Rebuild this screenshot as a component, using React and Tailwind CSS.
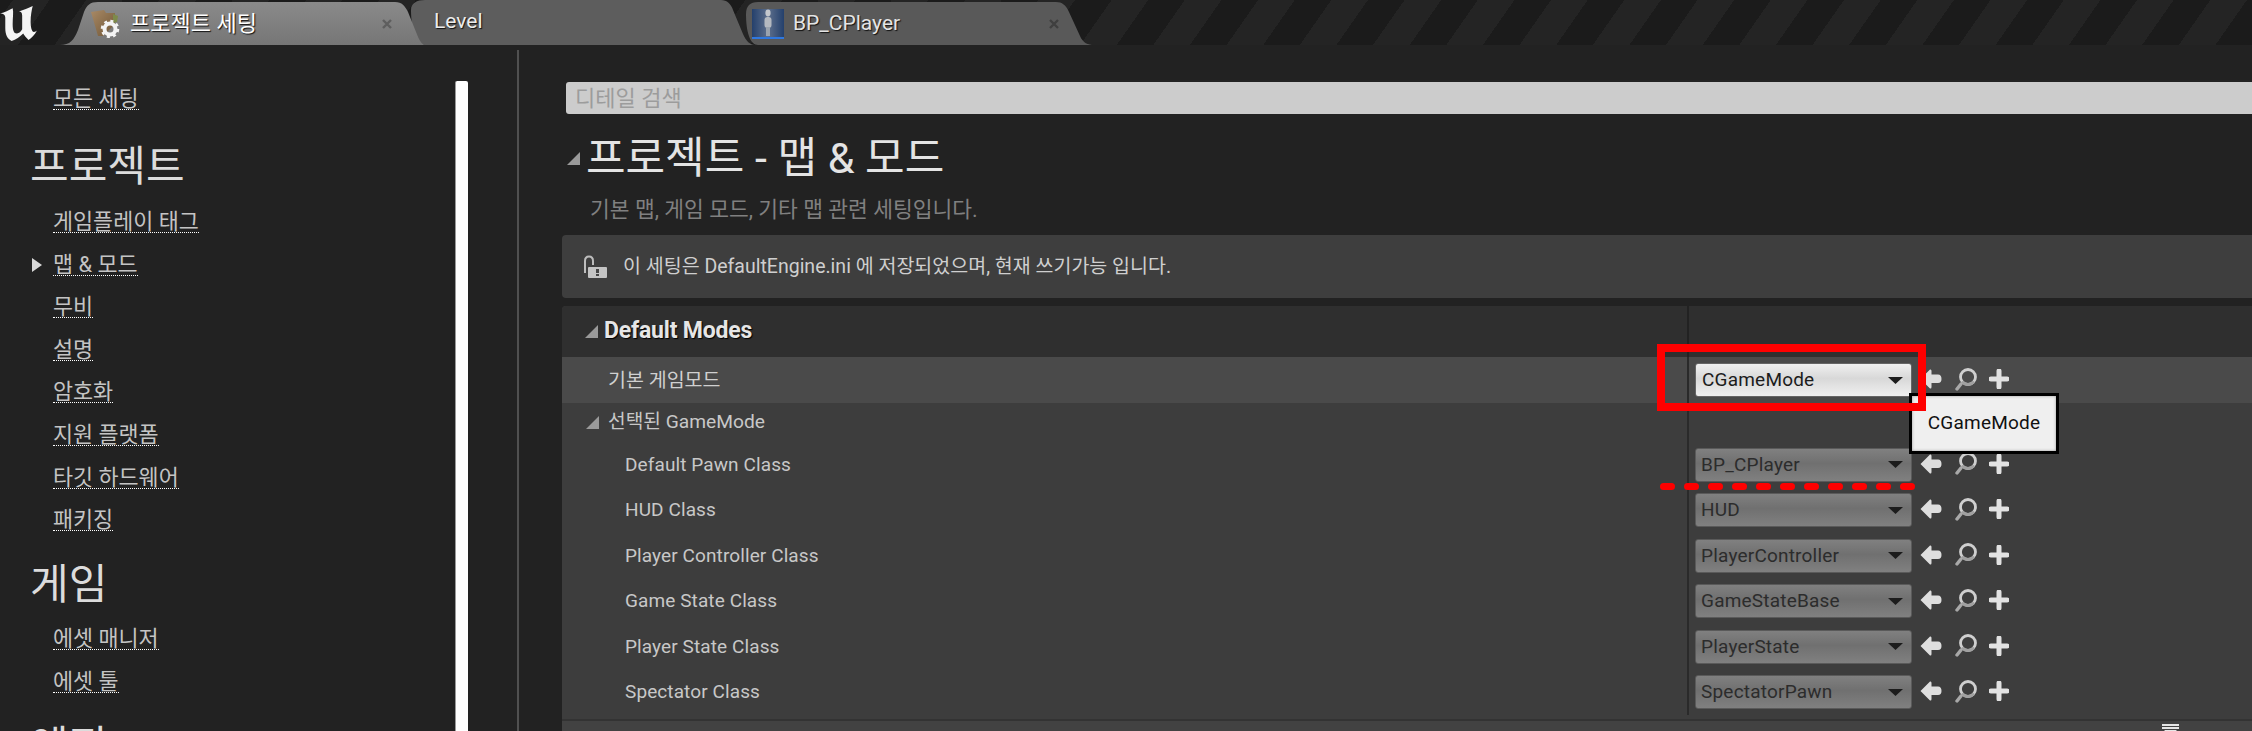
const font = "font-['Roboto','Noto_Sans_CJK_KR',sans-serif]";

function Collapse({ className = "" }) {
  return (
    <svg width="13" height="13" viewBox="0 0 13 13" className={className}>
      <polygon points="0,13 13,0 13,13" fill="#9a9a9a" />
    </svg>
  );
}

function Caret() {
  return (
    <svg width="15" height="7" viewBox="0 0 15 7" className="shrink-0">
      <polygon points="0,0 15,0 7.5,7" fill="#1c1c1c" />
    </svg>
  );
}

function BackArrow() {
  return (
    <svg width="22" height="20" viewBox="0 0 22 20">
      <path d="M0.5 10 L10 0.5 Q11.5 0 11.5 2 L11.5 5.5 L18 5.5 Q21.5 5.5 21.5 10 Q21.5 14 18 14 L11.5 14 L11.5 18 Q11.5 20 10 19.5 Z" fill="#dedede" />
    </svg>
  );
}

function Finder() {
  return (
    <svg width="22" height="23" viewBox="0 0 22 23">
      <path d="M6 16 L2 21" stroke="#a8a8a8" strokeWidth="3.4" strokeLinecap="round" />
      <circle cx="13" cy="9" r="7.5" fill="none" stroke="#cfcfcf" strokeWidth="2.8" />
      <path d="M7 13.5 A7.5 7.5 0 0 0 19 13.5" fill="none" stroke="#a0a0a0" strokeWidth="2.8" />
    </svg>
  );
}

function Plus() {
  return (
    <svg width="20" height="20" viewBox="0 0 20 20">
      <path d="M10 2 V18 M2 10 H18" stroke="#e2e2e2" strokeWidth="5" strokeLinecap="round" />
    </svg>
  );
}

function Lock() {
  return (
    <svg width="25" height="24" viewBox="0 0 25 24" className="shrink-0">
      <path d="M2 18 V6 Q2 1.5 6 1.5 Q10 1.5 10 6 V10" fill="none" stroke="#bdbdbd" strokeWidth="2" />
      <rect x="5" y="12" width="19" height="11" rx="1" fill="#c4c4c4" />
      <rect x="13" y="14" width="3" height="4" fill="#444" />
      <rect x="13" y="19" width="3" height="2" fill="#444" />
    </svg>
  );
}

function Logo() {
  return (
    <svg width="38" height="36" viewBox="0 0 36 34" className="shrink-0">
      <path
        d="M0 8 C5 7 8 5 12 3 C13 7 12 12 12 18 C12 24 13 27 16 27 C18 27 20 25 21 23 L21 10 C21 7 20 6 18 6 C22 5 27 3 31 1 C30 5 29 10 29 16 C29 21 30 24 31 25 C32 26 34 25 35 24 C33 28 30 31 27 33 C25 31 23 29 22 27 C19 30 15 33 11 34 C7 32 5 28 5 22 L5 12 C5 9 3 8 0 8 Z"
        fill="#f4f4f4"
      />
    </svg>
  );
}

function FolderIcon() {
  return (
    <svg width="30" height="28" viewBox="0 0 30 28" className="shrink-0">
      <defs>
        <linearGradient id="fold" x1="0" y1="0" x2="1" y2="1">
          <stop offset="0" stopColor="#a98a66" />
          <stop offset="1" stopColor="#6f5535" />
        </linearGradient>
      </defs>
      <path d="M0 2 L13 0 L15 3 L24 3 L24 14 L12 26 L7 26 Z" fill="url(#fold)" />
      <path d="M22 4 L27 6 L26 12 L22 13 Z" fill="#7d8a4a" />
      <circle cx="19" cy="19" r="5.5" fill="none" stroke="#f3f3f3" strokeWidth="4" />
      <circle cx="19" cy="19" r="8" fill="none" stroke="#f3f3f3" strokeWidth="2.5" strokeDasharray="3 3.3" />
    </svg>
  );
}

function PawnIcon() {
  return (
    <div className="w-[32px] h-[30px] shrink-0 bg-[linear-gradient(90deg,#24406c,#5d6f8c_50%,#24406c)] border-b-2 border-[#2f78e0] flex justify-center">
      <svg width="14" height="27" viewBox="0 0 14 27">
        <ellipse cx="7" cy="4" rx="2.6" ry="3.4" fill="#c4c8cd" />
        <rect x="3.5" y="8" width="7" height="11" rx="3" fill="#b4b9c0" />
        <rect x="5" y="18" width="4" height="9" fill="#9aa3ae" />
      </svg>
    </div>
  );
}

function CloseX({ color }) {
  return (
    <svg width="10" height="10" viewBox="0 0 10 10" className="shrink-0">
      <path d="M1 1 L9 9 M9 1 L1 9" stroke={color} strokeWidth="2.4" />
    </svg>
  );
}

function SideItem({ label, active }) {
  return (
    <div className="h-[42.6px] flex items-end pl-[53px] relative">
      {active && (
        <svg width="10" height="14" viewBox="0 0 10 14" className="absolute left-[32px] bottom-[4px]">
          <polygon points="0,0 10,7 0,14" fill="#d8d8d8" />
        </svg>
      )}
      <span className="text-[21.8px] leading-[25px] h-[24px] text-[#c4c4c4] border-b border-dotted border-white whitespace-nowrap">
        {label}
      </span>
    </div>
  );
}

function SideHeading({ label, height }) {
  return (
    <div className={`${height} flex items-end pl-[30px]`}>
      <span className="text-[42px] leading-[50px] text-[#dcdcdc] whitespace-nowrap">{label}</span>
    </div>
  );
}

function Dropdown({ value, active }) {
  return (
    <div
      className={
        active
          ? "w-[217px] h-[34px] rounded-[3px] border border-[#666] bg-[linear-gradient(#f0f0f0,#d8d8d8_45%,#f0f0f0)] flex items-center justify-between pl-[6px] pr-[8px]"
          : "w-[217px] h-[34px] rounded-[3px] border border-[#5a5a5a] bg-[linear-gradient(#808080,#707070_45%,#808080)] flex items-center justify-between pl-[5px] pr-[8px]"
      }
    >
      <span className={active ? "text-[19px] text-[#1c1c1c] tracking-[0.2px]" : "text-[19px] text-[#2c2c2c] tracking-[0.2px]"}>
        {value}
      </span>
      <Caret />
    </div>
  );
}

function ValueCell({ value, active }) {
  return (
    <div className="h-full flex items-center border-l-2 border-[#2a2a2a] pl-[6px]">
      <Dropdown value={value} active={active} />
      <div className="flex items-center ml-[8px] mb-[2px]">
        <BackArrow />
        <div className="ml-[13px] h-[23px]"><Finder /></div>
        <div className="ml-[12px] h-[20px]"><Plus /></div>
      </div>
    </div>
  );
}

function ClassRow({ label, value }) {
  return (
    <div className="h-[45.5px] flex items-center">
      <div className="w-[1125px] pl-[63px] text-[19px] text-[#c8c8c8] tracking-[0.1px]">{label}</div>
      <ValueCell value={value} />
    </div>
  );
}

const classes = [
  ["Default Pawn Class", "BP_CPlayer"],
  ["HUD Class", "HUD"],
  ["Player Controller Class", "PlayerController"],
  ["Game State Class", "GameStateBase"],
  ["Player State Class", "PlayerState"],
  ["Spectator Class", "SpectatorPawn"],
];

export default function App() {
  return (
    <div className={`${font} relative w-[2252px] h-[731px] overflow-hidden bg-[#222222]`}>
      {/* Tab strip */}
      <div className="h-[45px] flex items-end overflow-hidden bg-[repeating-linear-gradient(-55deg,#1b1b1b_0px,#1b1b1b_30px,#242424_30px,#242424_60px)]">
        <div className="w-[60px] h-[43px] flex items-center self-start pt-[2px]">
          <Logo />
        </div>
        <div className="relative z-20 w-[365px] h-[43px] shrink-0 bg-[linear-gradient(#8a8a8a,#767676)] [clip-path:path('M0_43C10_43_14_38_18_28L24_10C27_3_30_0_38_0L335_0C342_0_345_4_348_10L356_30C359_38_362_43_365_43Z')] flex items-center pl-[31px] pr-[33px]">
          <FolderIcon />
          <span className="ml-[9px] text-[22px] text-white [text-shadow:1px_1px_1px_#111] whitespace-nowrap">프로젝트 세팅</span>
          <span className="flex-1" />
          <CloseX color="#5e5e5e" />
        </div>
        <div className="relative z-0 ml-[-14px] w-[344px] h-[45px] shrink-0 bg-[#5d5d5d] [clip-path:path('M0_10C0_3_6_0_14_0L310_0C316_0_320_4_322_10L332_34C335_41_339_45_344_45L14_45C6_45_0_30_0_10Z')] flex items-center pl-[23px] pb-[2px]">
          <span className="text-[21px] text-[#ececec] [text-shadow:1px_1px_1px_#111]">Level</span>
        </div>
        <div className="relative z-10 ml-[-9px] w-[348px] h-[43px] shrink-0 bg-[#595959] [clip-path:path('M0_12C0_4_4_0_12_0L310_0C316_0_320_3_323_10L334_34C337_41_342_43_348_43L12_43C4_43_0_30_0_12Z')] flex items-center pl-[6px] pr-[35px]">
          <PawnIcon />
          <span className="ml-[9px] text-[21px] text-[#e4e4e4] [text-shadow:1px_1px_1px_#111]">BP_CPlayer</span>
          <span className="flex-1" />
          <CloseX color="#3f3f3f" />
        </div>
      </div>

      {/* Body */}
      <div className="flex h-[686px]">
        {/* Sidebar */}
        <div className="w-[517px] shrink-0 flex">
          <div className="w-[455px] pt-[22.4px]">
            <SideItem label="모든 세팅" />
            <SideHeading label="프로젝트" height="h-[82px] mb-[-1.6px]" />
            <SideItem label="게임플레이 태그" />
            <SideItem label="맵 & 모드" active />
            <SideItem label="무비" />
            <SideItem label="설명" />
            <SideItem label="암호화" />
            <SideItem label="지원 플랫폼" />
            <SideItem label="타깃 하드웨어" />
            <SideItem label="패키징" />
            <SideHeading label="게임" height="h-[79px] mb-[-2.6px]" />
            <SideItem label="에셋 매니저" />
            <SideItem label="에셋 툴" />
            <SideHeading label="엔진" height="h-[79px]" />
          </div>
          <div className="w-[13px] mt-[36px] bg-white border-l border-[#9a9a9a] rounded-t-[2px]" />
        </div>
        <div className="w-[2px] mt-[5px] bg-[#505050] shrink-0" />

        {/* Main */}
        <div className="flex-1 min-w-0 pl-[43px] pt-[37px]">
          <div className="ml-[4px] h-[32px] bg-[#cccccc] rounded-l-[3px] flex items-center pl-[9px]">
            <span className="text-[22px] text-[#9c9c9c]">디테일 검색</span>
          </div>

          <div className="h-[121px] pl-[5px] pt-[15px]">
            <div className="flex items-center h-[58px]">
              <Collapse />
              <span className="ml-[6px] text-[43px] leading-[50px] text-[#e4e4e4] whitespace-nowrap">프로젝트 - 맵 &amp; 모드</span>
            </div>
            <div className="ml-[23px] mt-[8px] text-[21.5px] leading-[30px] text-[#808080] whitespace-nowrap">
              기본 맵, 게임 모드, 기타 맵 관련 세팅입니다.
            </div>
          </div>

          <div className="h-[63px] bg-[#3e3e3e] rounded-l-[4px] flex items-center pl-[21px]">
            <Lock />
            <span className="ml-[15px] text-[19.5px] text-[#cfcfcf] whitespace-nowrap">
              이 세팅은 DefaultEngine.ini 에 저장되었으며, 현재 쓰기가능 입니다.
            </span>
          </div>

          <div className="mt-[8px] rounded-tl-[4px] overflow-hidden bg-[#3d3d3d]">
            <div className="h-[51px] bg-[#2f2f2f] flex items-center">
              <div className="w-[1125px] flex items-center pl-[23px]">
                <Collapse />
                <span className="ml-[6px] text-[23px] font-bold tracking-[-0.2px] text-[#e6e6e6] [text-shadow:1px_1px_1px_#000]">Default Modes</span>
              </div>
              <div className="h-full border-l-2 border-[#222222]" />
            </div>
            <div className="h-[46px] bg-[#4a4a4a] flex items-center">
              <div className="w-[1125px] pl-[46px] pt-[1px] text-[19.5px] text-[#d0d0d0]">기본 게임모드</div>
              <ValueCell value="CGameMode" active />
            </div>
            <div className="h-[39px] flex items-center">
              <div className="w-[1125px] flex items-center pl-[24px]">
                <Collapse />
                <span className="ml-[9px] text-[19.2px] text-[#c8c8c8]">선택된 GameMode</span>
              </div>
              <div className="h-full border-l-2 border-[#2a2a2a]" />
            </div>
            {classes.map(([l, v]) => (
              <ClassRow key={l} label={l} value={v} />
            ))}
            <div className="h-[4px]" />
          </div>

          <div className="h-[12px] border-t-2 border-[#333333] bg-[#424242] flex justify-end pr-[73px]">
            <svg width="17" height="12" viewBox="0 0 17 12" className="mt-[3px]">
              <path d="M0 1 H17 M0 4 H17" stroke="#e6e6e6" strokeWidth="2" />
              <polygon points="2,6 15,6 8.5,12" fill="#e6e6e6" />
            </svg>
          </div>
        </div>
      </div>

      {/* Annotations over the screenshot */}
      <div className="absolute left-[1909px] top-[393px] w-[150px] h-[61px] bg-[#efefef] border-[3px] border-black shadow-[inset_0_0_3px_#999] flex items-center justify-center">
        <span className="text-[19px] text-[#111] tracking-[0.2px]">CGameMode</span>
      </div>
      <div className="absolute left-[1657px] top-[344px] w-[269px] h-[67px] border-[8px] border-[#ff0000]" />
      <div className="absolute left-[1660px] top-[482.5px] flex gap-[9px]">
        {Array.from({ length: 11 }).map((_, i) => (
          <span key={i} className="block w-[15px] h-[7px] rounded-full bg-[#ff0000]" />
        ))}
      </div>
    </div>
  );
}
